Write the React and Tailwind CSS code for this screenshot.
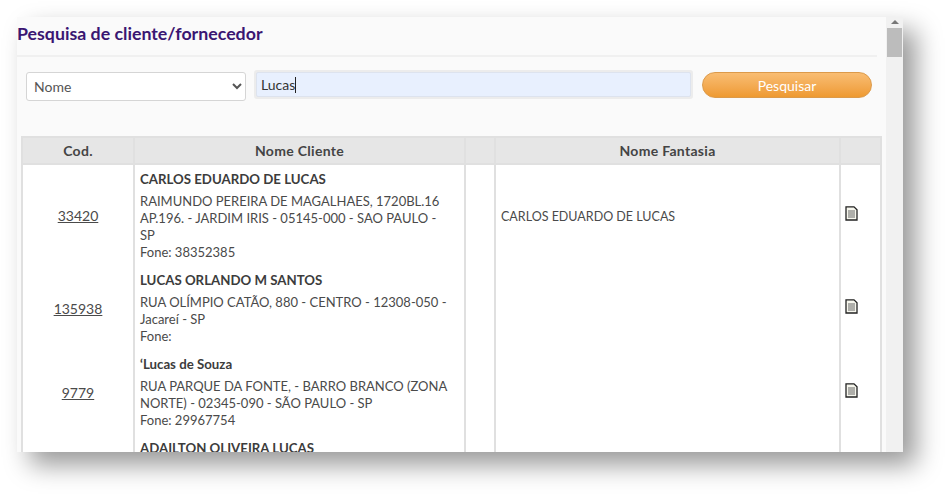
import React from 'react';

const clientes = [
  {
    cod: '33420',
    nome: 'CARLOS EDUARDO DE LUCAS',
    linhas: ['RAIMUNDO PEREIRA DE MAGALHAES, 1720BL.16', 'AP.196. - JARDIM IRIS - 05145-000 - SAO PAULO -', 'SP', 'Fone: 38352385'],
    fantasia: 'CARLOS EDUARDO DE LUCAS',
  },
  {
    cod: '135938',
    nome: 'LUCAS ORLANDO M SANTOS',
    linhas: ['RUA OLÍMPIO CATÃO, 880 - CENTRO - 12308-050 -', 'Jacareí - SP', 'Fone:'],
    fantasia: '',
  },
  {
    cod: '9779',
    nome: '‘Lucas de Souza',
    linhas: ['RUA PARQUE DA FONTE, - BARRO BRANCO (ZONA', 'NORTE) - 02345-090 - SÃO PAULO - SP', 'Fone: 29967754'],
    fantasia: '',
  },
  {
    cod: '',
    nome: 'ADAILTON OLIVEIRA LUCAS',
    linhas: [],
    fantasia: '',
  },
];

const DocIcon = () => (
  <svg width="13" height="15" viewBox="0 0 13 15" className="block">
    <path d="M1 .8h8l3 3V14H1z" fill="#f7f7ee" stroke="#222" strokeWidth="1.3" />
    <path d="M3 5h7M3 7h7M3 9h7M3 11h7" stroke="#666" strokeWidth="1" />
  </svg>
);

export default function App() {
  return (
    <div className="bg-white h-[500px] pt-[17px] pl-[17px] font-['Lato','Liberation_Sans',sans-serif] text-[14px] text-[#4a4a4a]">
      <div className="flex w-[886px] h-[435px] overflow-hidden bg-[#fafafa] shadow-[13px_13px_24px_rgba(0,0,0,0.4)]">
        <div className="w-[869px] shrink-0">
          {/* Title */}
          <h1 className="h-[40px] mr-[9px] border-b-2 border-[#f0f0f0] text-[17.75px] leading-[33px] font-bold text-[#3a1672]">
            Pesquisa de cliente/fornecedor
          </h1>

          {/* Search form */}
          <div className="flex items-start pl-[9px] pt-[15px]">
            <select className="w-[220px] h-[29px] pl-[3px] pr-[2px] bg-white border border-[#d5d5d5] rounded-[3px] text-[14px] text-[#555]">
              <option>Nome</option>
            </select>
            <div className="ml-[8px] -mt-[2px] w-[439px] h-[29px] p-[2px] rounded-[3px] bg-[#ececec]">
              <div className="flex items-center h-[25px] pl-[4px] bg-[#e8f0fe] border border-[#dde3ee] rounded-[2px] text-[#333]">
                Lucas
                <span className="w-px h-[16px] bg-[#222]" />
              </div>
            </div>
            <button className="ml-[9px] w-[170px] h-[26px] rounded-full border border-[#dc9a4a] bg-gradient-to-b from-[#f9bd72] to-[#ee9a30] text-white text-[14px]">
              Pesquisar
            </button>
          </div>

          {/* Results */}
          <table className="mt-[35px] ml-[4px] w-[859px] table-fixed border-collapse">
            <colgroup>
              <col className="w-[112px]" />
              <col className="w-[331px]" />
              <col className="w-[30px]" />
              <col className="w-[345px]" />
              <col className="w-[41px]" />
            </colgroup>
            <thead>
              <tr className="h-[27px] bg-[#e6e6e6] text-[#444] text-[14px] tracking-[0.3px]">
                <th className="border-2 border-[#e0e0e0] font-bold">Cod.</th>
                <th className="border-2 border-[#e0e0e0] font-bold">Nome Cliente</th>
                <th className="border-2 border-[#e0e0e0]" />
                <th className="border-2 border-[#e0e0e0] font-bold">Nome Fantasia</th>
                <th className="border-2 border-[#e0e0e0]" />
              </tr>
            </thead>
            <tbody className="bg-white">
              {clientes.map((c) => (
                <tr key={c.nome}>
                  <td className="border-x-2 border-[#e0e0e0] text-center underline">{c.cod}</td>
                  <td className="border-x-2 border-[#e0e0e0] pl-[5px] pt-[6px] pb-[5px] align-top text-[13px] leading-[17px]">
                    <div className="mb-[5px] font-bold text-[#3c3c3c] text-[13.25px]">{c.nome}</div>
                    {c.linhas.map((l) => (
                      <div key={l} className="whitespace-nowrap">{l}</div>
                    ))}
                  </td>
                  <td className="border-x-2 border-[#e0e0e0]" />
                  <td className="border-x-2 border-[#e0e0e0] pl-[5px] pt-[3px] text-[12.5px]">{c.fantasia}</td>
                  <td className="border-x-2 border-[#e0e0e0] pl-[4px] pb-[4px]">
                    {c.cod && <DocIcon />}
                  </td>
                </tr>
              ))}
            </tbody>
          </table>
        </div>

        {/* Scrollbar */}
        <div className="w-[17px] shrink-0 flex flex-col items-center bg-[#f1f1f1]">
          <div className="mt-[3px] w-0 h-0 border-x-[4px] border-x-transparent border-b-[4px] border-b-[#777]" />
          <div className="mt-[4px] w-[15px] h-[29px] bg-[#bcbcbc]" />
        </div>
      </div>
    </div>
  );
}
